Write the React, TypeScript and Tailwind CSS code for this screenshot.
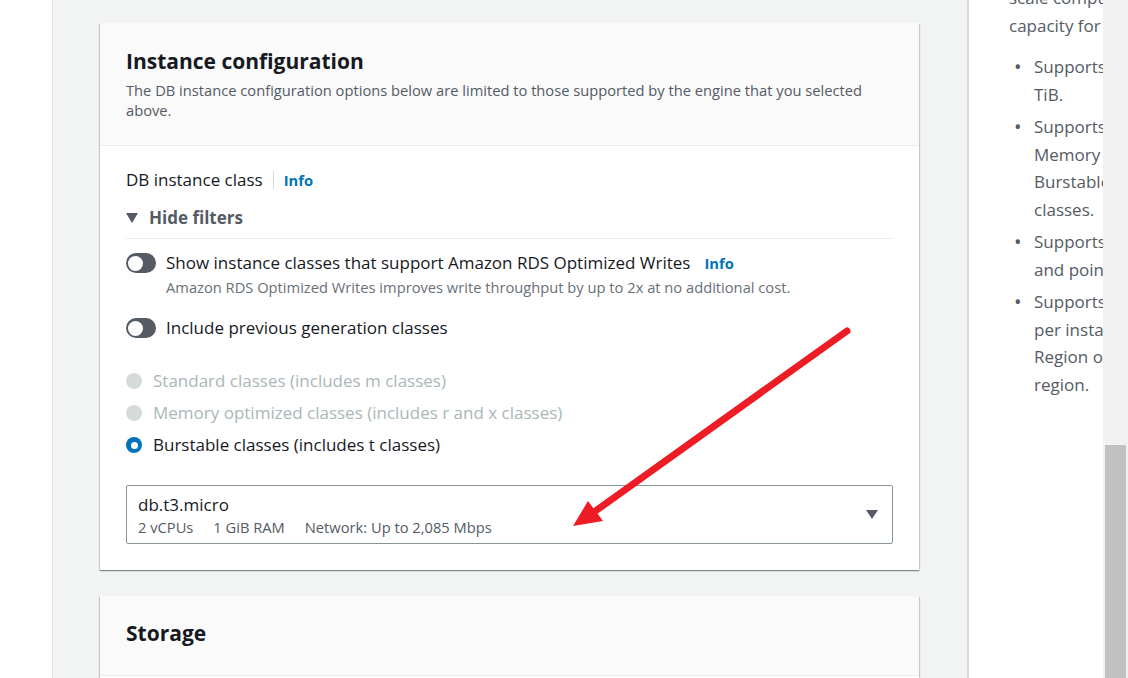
import React from 'react';

function Toggle() {
  return (
    <div className="flex h-[20px] w-[30px] shrink-0 items-center rounded-full bg-[#545b64] pl-[2px]">
      <div className="h-[15px] w-[15px] rounded-full bg-white" />
    </div>
  );
}

function Radio({ label, checked, disabled }: { label: string; checked?: boolean; disabled?: boolean }) {
  return (
    <div className="flex items-center gap-[11px]">
      {checked ? (
        <div className="flex h-[16px] w-[16px] items-center justify-center rounded-full bg-[#0073bb]">
          <div className="h-[7px] w-[7px] rounded-full bg-white" />
        </div>
      ) : (
        <div className="h-[16px] w-[16px] rounded-full bg-[#d5dbdb]" />
      )}
      <span className={`text-[17px] leading-[24px] ${disabled ? 'text-[#aab7b8]' : 'text-[#16191f]'}`}>{label}</span>
    </div>
  );
}

const bullets = [
  ['Supports up to 64', 'TiB.'],
  ['Supports Standard,', 'Memory optimized and', 'Burstable performance', 'classes.'],
  ['Supports automated backup', 'and point-in-time recovery.'],
  ['Supports up to 15 read replicas', 'per instance, within a single', 'Region or 5 read replicas cross-', 'region.'],
];

export default function App() {
  return (
    <div className="relative flex h-[678px] w-[1128px] overflow-hidden bg-white font-['Open_Sans',sans-serif]">
      <div className="w-[52px] shrink-0 bg-white" />

      <main className="flex w-[917px] shrink-0 flex-col gap-[26px] border-l border-r-2 border-l-[#e4e7e7] border-r-[#d5dbdb] bg-[#f2f3f3] pl-[47px] pt-[23px]">
        <section className="w-[819px] bg-white shadow-[0_1px_1px_0_rgba(0,28,36,0.3),1px_1px_1px_0_rgba(0,28,36,0.15),-1px_1px_1px_0_rgba(0,28,36,0.15)]">
          <header className="border-b border-[#eaeded] bg-[#fafafa] px-[26px] pb-[25px] pt-[24px]">
            <h2 className="text-[21px] font-bold leading-[28px] text-[#16191f]">Instance configuration</h2>
            <p className="mt-[5px] text-[14.7px] leading-[20px] text-[#545b64]">
              The DB instance configuration options below are limited to those supported by the engine that you selected above.
            </p>
          </header>

          <div className="px-[26px] pb-[26px] pt-[22px]">
            <div className="flex items-center text-[17px] leading-[24px] text-[#16191f]">
              <span>DB instance class</span>
              <span className="mx-[10px] h-[18px] w-px bg-[#d5dbdb]" />
              <span className="text-[14.7px] font-bold text-[#0073bb]">Info</span>
            </div>

            <div className="mt-[14px] flex items-center gap-[11px] text-[17px] font-bold leading-[24px] text-[#545b64]">
              <svg width="12" height="10" viewBox="0 0 12 10">
                <path d="M0 0h12L6 10z" fill="#545b64" />
              </svg>
              <span>Hide filters</span>
            </div>

            <div className="mt-[8px] h-px bg-[#eaeded]" />

            <div className="mt-[12px] flex gap-[10px]">
              <div className="pt-[2px]">
                <Toggle />
              </div>
              <div>
                <div className="flex items-center text-[17px] leading-[24px] text-[#16191f]">
                  <span>Show instance classes that support Amazon RDS Optimized Writes</span>
                  <span className="ml-[14px] text-[14.7px] font-bold text-[#0073bb]">Info</span>
                </div>
                <p className="mt-[2px] text-[14.7px] leading-[20px] text-[#687078]">
                  Amazon RDS Optimized Writes improves write throughput by up to 2x at no additional cost.
                </p>
              </div>
            </div>

            <div className="mt-[19px] flex items-center gap-[10px]">
              <Toggle />
              <span className="text-[17px] leading-[24px] text-[#16191f]">Include previous generation classes</span>
            </div>

            <div className="mt-[29px] flex flex-col gap-[8px]">
              <Radio label="Standard classes (includes m classes)" disabled />
              <Radio label="Memory optimized classes (includes r and x classes)" disabled />
              <Radio label="Burstable classes (includes t classes)" checked />
            </div>

            <div className="mt-[28px] flex h-[59px] items-center justify-between rounded-[2px] border border-[#879596] pl-[11px] pr-[14px]">
              <div>
                <div className="text-[17px] leading-[22px] text-[#16191f]">db.t3.micro</div>
                <div className="mt-[2px] flex gap-[20px] text-[14.7px] leading-[18px] text-[#545b64]">
                  <span>2 vCPUs</span>
                  <span>1 GiB RAM</span>
                  <span>Network: Up to 2,085 Mbps</span>
                </div>
              </div>
              <svg width="12" height="9" viewBox="0 0 12 9">
                <path d="M0 0h12L6 9z" fill="#545b64" />
              </svg>
            </div>
          </div>
        </section>

        <section className="w-[819px] flex-1 bg-white shadow-[0_1px_1px_0_rgba(0,28,36,0.3),1px_1px_1px_0_rgba(0,28,36,0.15),-1px_1px_1px_0_rgba(0,28,36,0.15)]">
          <header className="border-b border-[#eaeded] bg-[#fafafa] px-[26px] pb-[28px] pt-[23px]">
            <h2 className="text-[21px] font-bold leading-[28px] text-[#16191f]">Storage</h2>
          </header>
        </section>
      </main>

      <aside className="w-[134px] shrink-0 overflow-hidden pl-[40px] text-[17px] leading-[27.5px] text-[#545b64]">
        <div className="-mt-[16px] whitespace-nowrap">
          scale compute
          <br />
          capacity for
        </div>
        <ul className="mt-[14px] flex flex-col gap-[5px]">
          {bullets.map((lines, i) => (
            <li key={i} className="flex whitespace-nowrap">
              <span className="w-[25px] shrink-0 pl-[5px] text-[20px] leading-[27.5px]">•</span>
              <span>
                {lines.map((l, j) => (
                  <React.Fragment key={j}>
                    {j > 0 && <br />}
                    {l}
                  </React.Fragment>
                ))}
              </span>
            </li>
          ))}
        </ul>
      </aside>

      <div className="flex w-[25px] shrink-0 flex-col justify-end bg-[#f1f1f1] px-[2px]">
        <div className="h-[233px] bg-[#c1c1c1]" />
      </div>

      <svg className="pointer-events-none absolute left-0 top-0" width="1128" height="678" viewBox="0 0 1128 678">
        <line x1="847" y1="331" x2="594" y2="512" stroke="#ee1c25" strokeWidth="7" strokeLinecap="round" />
        <path d="M573 526L588 501L603 521Z" fill="#ee1c25" />
      </svg>
    </div>
  );
}
